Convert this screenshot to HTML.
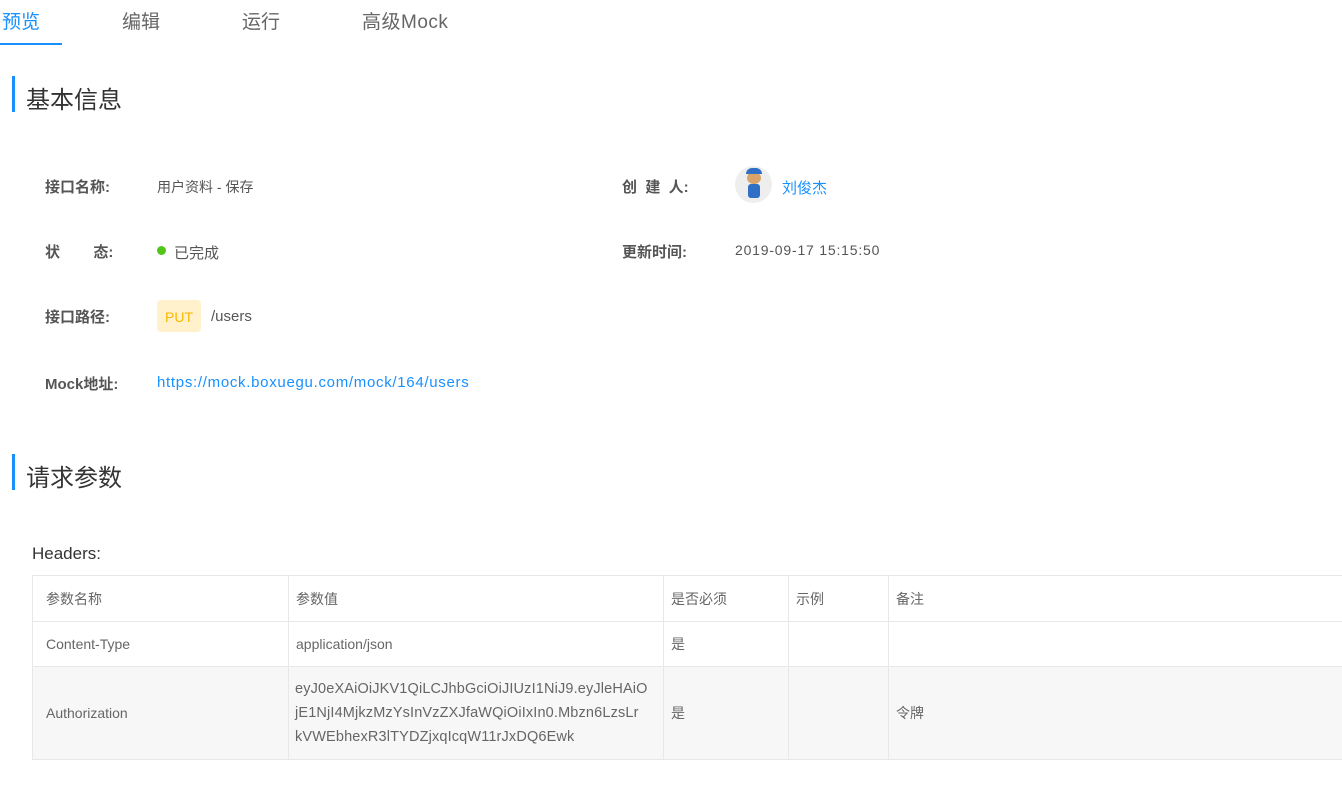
<!DOCTYPE html>
<html><head><meta charset="utf-8"><style>
*{margin:0;padding:0;box-sizing:border-box}
body{width:1342px;height:792px;overflow:hidden;background:#fff;font-family:"Liberation Sans","Noto Sans CJK SC",sans-serif;color:#606266;position:relative}
.a{position:absolute;white-space:nowrap}
.tab{font-size:19px;color:#666;top:7px}
.h{font-size:24px;color:#333;left:26px}
.bar{position:absolute;left:12px;width:3px;height:36px;background:#1890ff}
.lab{font-size:15px;font-weight:bold;color:#555}
.val{font-size:14px;color:#555}
.blue{color:#1890ff}
table{position:absolute;left:32px;top:575px;width:1330px;border-collapse:collapse;font-size:14px;color:#666;table-layout:fixed}
td{border:1px solid #e8e8e8;padding:0 13px;vertical-align:middle;white-space:nowrap;overflow:hidden}
.tok{font-size:14.5px;line-height:24px;letter-spacing:0.15px;padding:0 6px}
</style></head><body>
<div class="a tab" style="left:2px;color:#1890ff">预览</div>
<div class="a tab" style="left:122px">编辑</div>
<div class="a tab" style="left:242px">运行</div>
<div class="a tab" style="left:362px;letter-spacing:0.5px">高级Mock</div>
<div style="position:absolute;left:0;top:43px;width:62px;height:2px;background:#1890ff"></div>

<div class="bar" style="top:76px"></div>
<div class="a h" style="top:80px">基本信息</div>

<div class="a lab" style="left:45px;top:176px">接口名称:</div>
<div class="a val" style="left:157px;top:177px">用户资料 - 保存</div>
<div class="a lab" style="left:622px;top:176px">创&nbsp;&nbsp;建&nbsp;&nbsp;人:</div>
<div style="position:absolute;left:735px;top:166px;width:37px;height:37px;border-radius:50%;background:#eee"></div>
<div style="position:absolute;left:747px;top:172px;width:14px;height:12px;border-radius:50%;background:#d9a36a"></div>
<div style="position:absolute;left:746px;top:168px;width:16px;height:6px;border-radius:6px 6px 0 0;background:#2f6fc6"></div>
<div style="position:absolute;left:748px;top:184px;width:12px;height:14px;border-radius:3px;background:#2f6fc6"></div>
<div class="a val blue" style="left:782px;top:177px;font-size:15px">刘俊杰</div>

<div class="a lab" style="left:45px;top:241px">状&nbsp;&nbsp;&nbsp;&nbsp;&nbsp;&nbsp;&nbsp;&nbsp;态:</div>
<div style="position:absolute;left:157px;top:246px;width:9px;height:9px;border-radius:50%;background:#52c41a"></div>
<div class="a val" style="left:174px;top:242px;font-size:15px">已完成</div>
<div class="a lab" style="left:622px;top:241px">更新时间:</div>
<div class="a val" style="left:735px;top:242px;letter-spacing:0.8px">2019-09-17 15:15:50</div>

<div class="a lab" style="left:45px;top:306px">接口路径:</div>
<div style="position:absolute;left:157px;top:300px;width:44px;height:32px;border-radius:4px;background:#fff1cc;color:#fab700;font-size:14px;text-align:center;line-height:34px">PUT</div>
<div class="a val" style="left:211px;top:308px;font-size:15px">/users</div>

<div class="a lab" style="left:45px;top:373px">Mock地址:</div>
<div class="a val blue" style="left:157px;top:374px;font-size:15px;letter-spacing:0.7px">https://mock.boxuegu.com/mock/164/users</div>

<div class="bar" style="top:454px"></div>
<div class="a h" style="top:458px">请求参数</div>

<div class="a" style="left:32px;top:544px;font-size:17px;color:#333">Headers:</div>

<table>
<colgroup><col style="width:256px"><col style="width:375px"><col style="width:125px"><col style="width:100px"><col></colgroup>
<tr style="height:46px"><td>参数名称</td><td style="padding-left:7px">参数值</td><td style="padding-left:7px">是否必须</td><td style="padding-left:7px">示例</td><td style="padding-left:7px">备注</td></tr>
<tr style="height:45px"><td>Content-Type</td><td style="padding-left:7px">application/json</td><td style="padding-left:7px">是</td><td></td><td></td></tr>
<tr style="height:93px;background:#f7f7f7"><td>Authorization</td><td class="tok">eyJ0eXAiOiJKV1QiLCJhbGciOiJIUzI1NiJ9.eyJleHAiO<br>jE1NjI4MjkzMzYsInVzZXJfaWQiOiIxIn0.Mbzn6LzsLr<br>kVWEbhexR3lTYDZjxqIcqW11rJxDQ6Ewk</td><td style="padding-left:7px">是</td><td></td><td style="padding-left:7px">令牌</td></tr>
</table>
</body></html>
